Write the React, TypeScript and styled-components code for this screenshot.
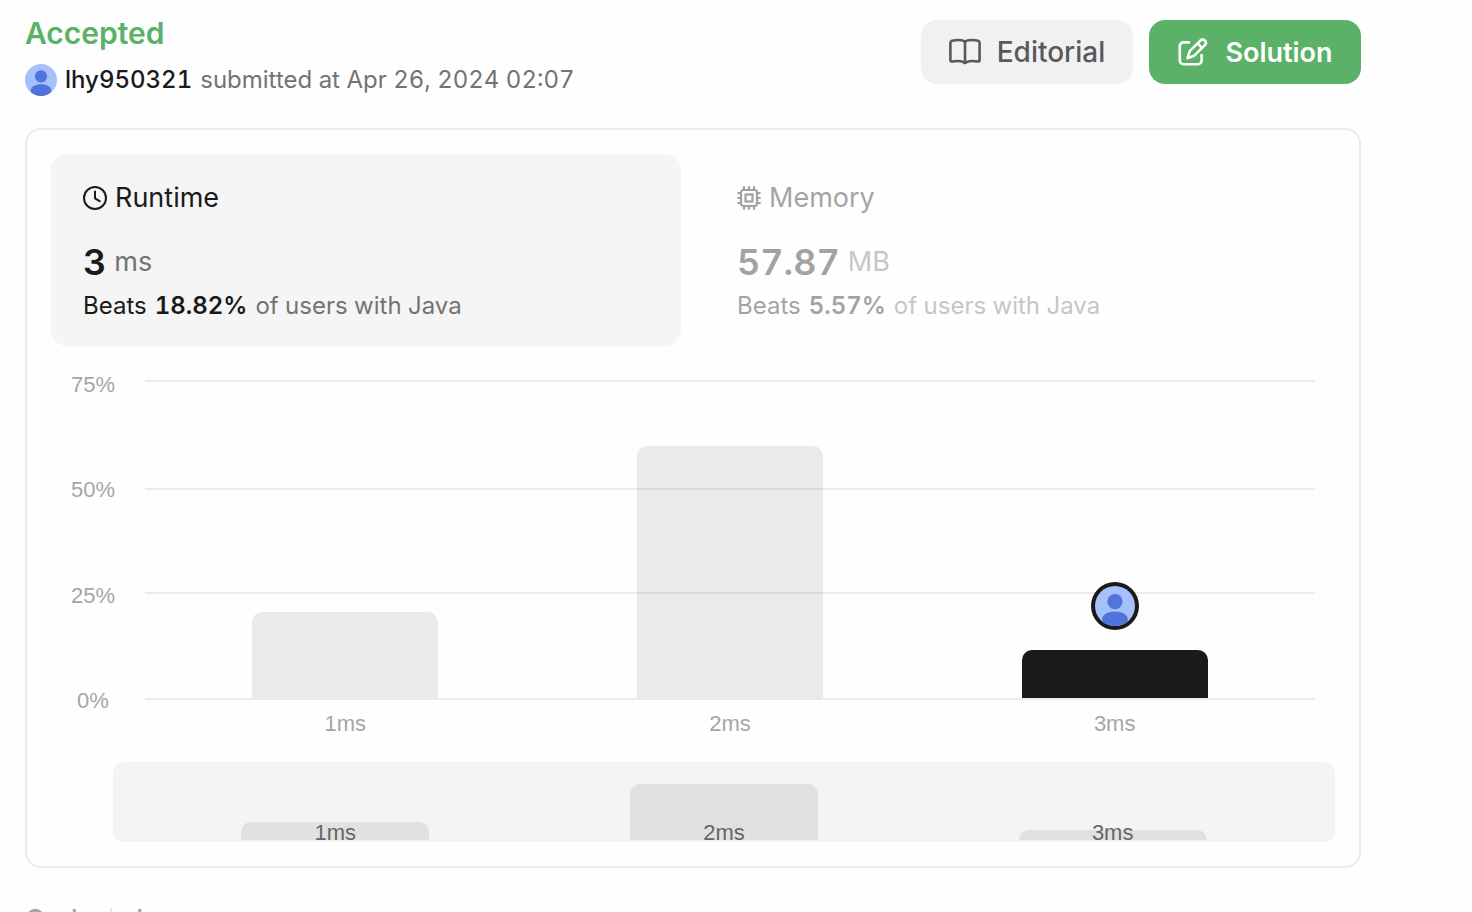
import React from "react";
import styled, { createGlobalStyle } from "styled-components";

const GlobalStyle = createGlobalStyle`
  *, *::before, *::after { box-sizing: border-box; }
  body {
    margin: 0;
    background: #fefefe;
    color: #1a1a1a;
    font-family: Inter, "Liberation Sans", sans-serif;
    font-variant-numeric: tabular-nums;
  }
  button { font: inherit; font-variant-numeric: inherit; border: 0; cursor: pointer; }
  h1, h2, p { margin: 0; }
`;

const Page = styled.main`
  height: 100vh;
  overflow: hidden;
  padding: 12px 111px 0 25px;
`;

const Header = styled.header`
  display: flex;
  justify-content: space-between;
  align-items: flex-start;
  height: 116px;
`;

const Status = styled.h1`
  color: #5bb168;
  font-size: 30px;
  font-weight: 600;
  line-height: 42px;
`;

const Submitter = styled.div`
  display: flex;
  align-items: center;
  gap: 8px;
  margin-top: 10px;
  font-size: 24px;
  line-height: 32px;
  color: #737373;
`;

const UserName = styled.span`
  color: #1a1a1a;
  font-weight: 500;
`;

const Actions = styled.div`
  display: flex;
  gap: 16px;
  padding-top: 8px;
`;

const ActionButton = styled.button<{ $primary?: boolean }>`
  display: flex;
  align-items: center;
  justify-content: center;
  gap: 16px;
  width: 212px;
  height: 64px;
  padding: 0;
  border-radius: 16px;
  font-size: ${(p) => (p.$primary ? "27px" : "28px")};
  font-weight: ${(p) => (p.$primary ? 600 : 500)};
  color: ${(p) => (p.$primary ? "#fff" : "#595959")};
  background: ${(p) => (p.$primary ? "#5bb168" : "#f1f1f4")};
`;

const Card = styled.section`
  border: 2px solid #ebebeb;
  border-radius: 16px;
  padding: 24px;
`;

const Metrics = styled.div`
  display: grid;
  grid-template-columns: 1fr 1fr;
  gap: 24px;
`;

const Metric = styled.button<{ $active?: boolean }>`
  display: flex;
  flex-direction: column;
  height: 192px;
  padding: 28px 32px 0;
  border-radius: 16px;
  text-align: left;
  color: #1a1a1a;
  background: ${(p) => (p.$active ? "#f5f5f5" : "transparent")};
  & > * { opacity: ${(p) => (p.$active ? 1 : 0.4)}; }
`;

const MetricTitle = styled.span`
  display: flex;
  align-items: center;
  gap: 8px;
  font-size: 27px;
  line-height: 32px;
`;

const MetricValue = styled.span`
  display: flex;
  align-items: center;
  gap: 8px;
  margin-top: 24px;
  font-size: 36px;
  font-weight: 600;
  line-height: 48px;
`;

const Unit = styled.span`
  color: #737373;
  font-size: 27px;
  font-weight: 400;
`;

const Beats = styled.span`
  display: flex;
  gap: 8px;
  margin-top: 4px;
  font-size: 24px;
  line-height: 32px;
`;

const Percent = styled.strong`
  font-weight: 600;
`;

const Muted = styled.span`
  color: #737373;
`;

const Chart = styled.div`
  display: grid;
  grid-template-columns: 84px 1fr;
  column-gap: 10px;
  padding: 27px 20px 0 0;
  font-family: "Liberation Sans", Arial, sans-serif;
  font-size: 22px;
  color: #a6a6a6;
`;

const YAxis = styled.div`
  display: flex;
  flex-direction: column;
  align-items: center;
  justify-content: space-between;
  height: 339px;
  line-height: 23px;
`;

const Plot = styled.div`
  display: grid;
  margin-top: 7px;
  height: 320px;
  & > * { grid-area: 1 / 1; }
`;

const GridLines = styled.div`
  display: grid;
  grid-template-rows: 108px 104px 106px 2px;
`;

const GridLine = styled.div`
  border-top: 2px solid #ebebeb;
`;

const Bars = styled.div`
  display: grid;
  grid-template-columns: repeat(3, 1fr);
  align-items: end;
  padding: 0 8px 2px;
  z-index: 1;
`;

const BarSlot = styled.div`
  display: flex;
  flex-direction: column;
  align-items: center;
  gap: 20px;
`;

const Bar = styled.div<{ $current?: boolean }>`
  width: 186px;
  border-radius: 10px 10px 0 0;
  background: ${(p) => (p.$current ? "#1a1a1a" : "rgba(0, 0, 0, 0.08)")};
`;

const Marker = styled.div`
  display: flex;
  padding: 4px;
  border-radius: 50%;
  background: #1a1a1a;
`;

const XAxis = styled.div`
  grid-column: 2;
  display: grid;
  grid-template-columns: repeat(3, 1fr);
  padding: 0 8px;
  line-height: 24px;
  text-align: center;
`;

const Overview = styled.div`
  display: grid;
  grid-template-columns: repeat(3, 1fr);
  align-items: end;
  height: 80px;
  margin: 26px 0 0 62px;
  padding: 0 28px 2px;
  border-radius: 10px;
  background: #f4f4f4;
`;

const OverviewSlot = styled.div`
  display: grid;
  justify-items: center;
  align-items: end;
  & > * { grid-area: 1 / 1; }
`;

const OverviewBar = styled.div`
  width: 188px;
  border-radius: 10px 10px 0 0;
  background: #e1e1e1;
`;

const OverviewLabel = styled.span`
  height: 18px;
  font-family: "Liberation Sans", Arial, sans-serif;
  font-size: 22px;
  line-height: 22px;
  color: #666;
`;

const CodeHeader = styled.div`
  display: flex;
  align-items: center;
  gap: 16px;
  margin-top: 34px;
  font-size: 27px;
  font-weight: 500;
  line-height: 36px;
  color: #a3a3a3;
`;

const Divider = styled.span`
  width: 2px;
  height: 24px;
  background: #e5e5e5;
`;

function Avatar({ size }: { size: number }) {
  return (
    <svg width={size} height={size} viewBox="0 0 32 32" aria-hidden="true">
      <defs>
        <clipPath id={`avatar-${size}`}>
          <circle cx="16" cy="16" r="16" />
        </clipPath>
      </defs>
      <g clipPath={`url(#avatar-${size})`}>
        <rect width="32" height="32" fill="#a6c0fb" />
        <circle cx="16" cy="12.4" r="6.1" fill="#4f74dc" />
        <path
          d="M5.8 26.5c0-3.9 4.6-6.2 10.2-6.2s10.2 2.3 10.2 6.2c0 3-1 5.5-4 5.5H9.8c-3 0-4-2.5-4-5.5z"
          fill="#4f74dc"
        />
      </g>
    </svg>
  );
}

function BookIcon() {
  return (
    <svg width="32" height="32" viewBox="0 0 32 32" fill="none" stroke="currentColor" strokeWidth="2.6" strokeLinejoin="round" strokeLinecap="round" aria-hidden="true">
      <path d="M16 5.4C12.8 4 7.200 3.800 3 4.800 2 5.100 1.400 5.800 1.400 6.800v17.400c0 1 .7 1.500 1.700 1.300 4.100-.7 8.900-.6 11.300.6l1.600.9 1.600-.9c2.400-1.200 7.200-1.300 11.300-.6 1 .2 1.700-.3 1.700-1.300V6.800c0-1-.6-1.700-1.600-2C24.800 3.800 19.200 4 16 5.400z" />
      <path d="M16 5.400v21" />
    </svg>
  );
}

function PencilIcon() {
  return (
    <svg width="32" height="32" viewBox="0 0 32 32" fill="none" stroke="currentColor" strokeWidth="2.6" strokeLinejoin="round" strokeLinecap="round" aria-hidden="true">
      <path d="M12 6.4H6.500A3.700 3.700 0 0 0 2.800 10.100v14.400a3.700 3.700 0 0 0 3.700 3.700h14.400a3.700 3.700 0 0 0 3.700-3.700V19" />
      <path d="M23.6 4.300a3.200 3.200 0 0 1 4.500 4.500L17.200 19.700l-6.700 2.500 2.200-7z" />
      <path d="M20.6 7.400l4.400 4.400" />
    </svg>
  );
}

function ClockIcon() {
  return (
    <svg width="24" height="24" viewBox="0 0 24 24" fill="none" stroke="currentColor" strokeWidth="2" strokeLinecap="round" strokeLinejoin="round" aria-hidden="true">
      <circle cx="12" cy="12" r="11" />
      <path d="M12 5.5V12.300l4.700 2.900" />
    </svg>
  );
}

function ChipIcon() {
  return (
    <svg width="24" height="24" viewBox="0 0 24 24" fill="none" stroke="currentColor" strokeWidth="2.2" strokeLinecap="round" aria-hidden="true">
      <rect x="4" y="4" width="16" height="16" rx="2.5" />
      <rect x="8.5" y="8.5" width="7" height="7" />
      <path d="M7 4V1.200M12 4V1.200M17 4V1.200M7 22.800v-3M12 22.800v-3M17 22.800v-3M4 7H1.200M4 12H1.200M4 17H1.200M22.800 7h-3M22.800 12h-3M22.800 17h-3" />
    </svg>
  );
}

const distribution = [
  { label: "1ms", height: 86, overview: 18 },
  { label: "2ms", height: 252, overview: 56 },
  { label: "3ms", height: 48, overview: 10, current: true },
];

const ticks = ["75%", "50%", "25%", "0%"];

export default function App() {
  return (
    <>
      <GlobalStyle />
      <Page>
        <Header>
          <div>
            <Status>Accepted</Status>
            <Submitter>
              <Avatar size={32} />
              <UserName>lhy950321</UserName>
              <span>submitted at Apr 26, 2024 02:07</span>
            </Submitter>
          </div>
          <Actions>
            <ActionButton type="button">
              <BookIcon />
              Editorial
            </ActionButton>
            <ActionButton type="button" $primary>
              <PencilIcon />
              Solution
            </ActionButton>
          </Actions>
        </Header>

        <Card>
          <Metrics>
            <Metric type="button" $active>
              <MetricTitle>
                <ClockIcon />
                Runtime
              </MetricTitle>
              <MetricValue>
                3<Unit>ms</Unit>
              </MetricValue>
              <Beats>
                Beats <Percent>18.82%</Percent> <Muted>of users with Java</Muted>
              </Beats>
            </Metric>
            <Metric type="button">
              <MetricTitle>
                <ChipIcon />
                Memory
              </MetricTitle>
              <MetricValue>
                57.87<Unit>MB</Unit>
              </MetricValue>
              <Beats>
                Beats <Percent>5.57%</Percent> <Muted>of users with Java</Muted>
              </Beats>
            </Metric>
          </Metrics>

          <Chart>
            <YAxis>
              {ticks.map((tick) => (
                <span key={tick}>{tick}</span>
              ))}
            </YAxis>
            <Plot>
              <GridLines>
                {ticks.map((tick) => (
                  <GridLine key={tick} />
                ))}
              </GridLines>
              <Bars>
                {distribution.map((d) => (
                  <BarSlot key={d.label}>
                    {d.current && (
                      <Marker>
                        <Avatar size={40} />
                      </Marker>
                    )}
                    <Bar $current={d.current} style={{ height: d.height }} />
                  </BarSlot>
                ))}
              </Bars>
            </Plot>
            <XAxis>
              {distribution.map((d) => (
                <span key={d.label}>{d.label}</span>
              ))}
            </XAxis>
          </Chart>

          <Overview>
            {distribution.map((d) => (
              <OverviewSlot key={d.label}>
                <OverviewBar style={{ height: d.overview }} />
                <OverviewLabel>{d.label}</OverviewLabel>
              </OverviewSlot>
            ))}
          </Overview>
        </Card>

        <CodeHeader>
          <span>Code</span>
          <Divider />
          <span>Java</span>
        </CodeHeader>
      </Page>
    </>
  );
}
